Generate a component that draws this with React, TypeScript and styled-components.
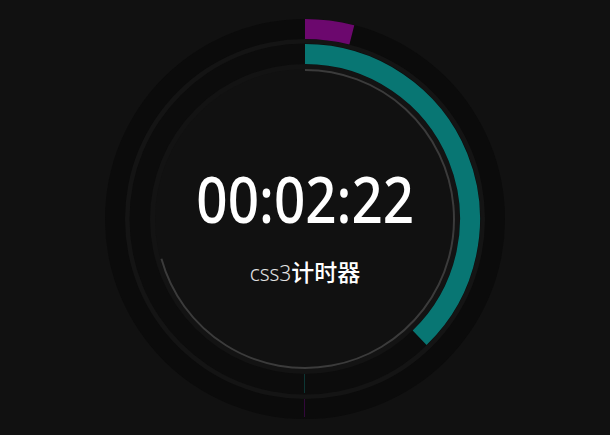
import React from "react";
import styled, { createGlobalStyle } from "styled-components";

const Global = createGlobalStyle`
  html, body { margin: 0; padding: 0; background: #111111; }
  body { font-family: "Noto Sans", "Noto Sans CJK SC", sans-serif; }
`;

const Page = styled.div`
  width: 610px;
  height: 435px;
  display: flex;
  justify-content: center;
  padding-top: 19px;
  box-sizing: border-box;
  overflow: hidden;
`;

const Dial = styled.div`
  width: 400px;
  height: 400px;
  display: grid;
  & > * { grid-area: 1 / 1; }
`;

const Rings = styled.svg`
  width: 400px;
  height: 400px;
  display: block;
`;

const Face = styled.div`
  display: flex;
  flex-direction: column;
  align-items: center;
  padding-top: 148px;
`;

const Time = styled.div`
  font-family: "Noto Sans", sans-serif;
  font-size: 63px;
  font-weight: 500;
  line-height: 63px;
  color: #ffffff;
  transform: scaleX(0.87);
  white-space: nowrap;
`;

const Caption = styled.div`
  margin-top: 28px;
  display: flex;
  align-items: baseline;
  line-height: 26px;
`;

const Latin = styled.span`
  font-family: "Noto Sans", sans-serif;
  font-size: 21px;
  font-weight: 300;
  color: #e2e2e2;
`;

const Han = styled.span`
  font-family: "Noto Sans CJK SC", sans-serif;
  font-size: 23px;
  font-weight: 500;
  color: #ffffff;
`;

const C = 200;

function pt(r: number, deg: number) {
  const a = (deg * Math.PI) / 180;
  return [C + r * Math.sin(a), C - r * Math.cos(a)];
}

function arc(r: number, a0: number, a1: number) {
  const [x0, y0] = pt(r, a0);
  const [x1, y1] = pt(r, a1);
  const large = a1 - a0 > 180 ? 1 : 0;
  return `M ${x0} ${y0} A ${r} ${r} 0 ${large} 1 ${x1} ${y1}`;
}

const minutesDeg = ((2 + 22.7 / 60) / 60) * 360;
const secondsDeg = 136;
const innerDeg = 254.5;

export default function App() {
  return (
    <>
      <Global />
      <Page>
        <Dial>
          <Rings viewBox="0 0 400 400">
            <circle cx={C} cy={C} r={200} fill="#0b0b0b" />
            <circle cx={C} cy={C} r={180} fill="#141414" />
            <circle cx={C} cy={C} r={175.5} fill="#0c0c0c" />
            <circle cx={C} cy={C} r={155} fill="#131313" />
            <circle cx={C} cy={C} r={150} fill="#111111" />
            <path d={arc(190, 0, minutesDeg)} stroke="#6c086e" strokeWidth={20} fill="none" />
            <path d={arc(165, 0, secondsDeg)} stroke="#087673" strokeWidth={20} fill="none" />
            <path d={arc(149, 0, innerDeg)} stroke="#3b3b3b" strokeWidth={2} fill="none" />
            <line x1={199.5} y1={355} x2={199.5} y2={374} stroke="#0d3634" strokeWidth={1} />
            <line x1={199.5} y1={380} x2={199.5} y2={398} stroke="#32083a" strokeWidth={1} />
          </Rings>
          <Face>
            <Time>00:02:22</Time>
            <Caption>
              <Latin>css3</Latin>
              <Han>计时器</Han>
            </Caption>
          </Face>
        </Dial>
      </Page>
    </>
  );
}
